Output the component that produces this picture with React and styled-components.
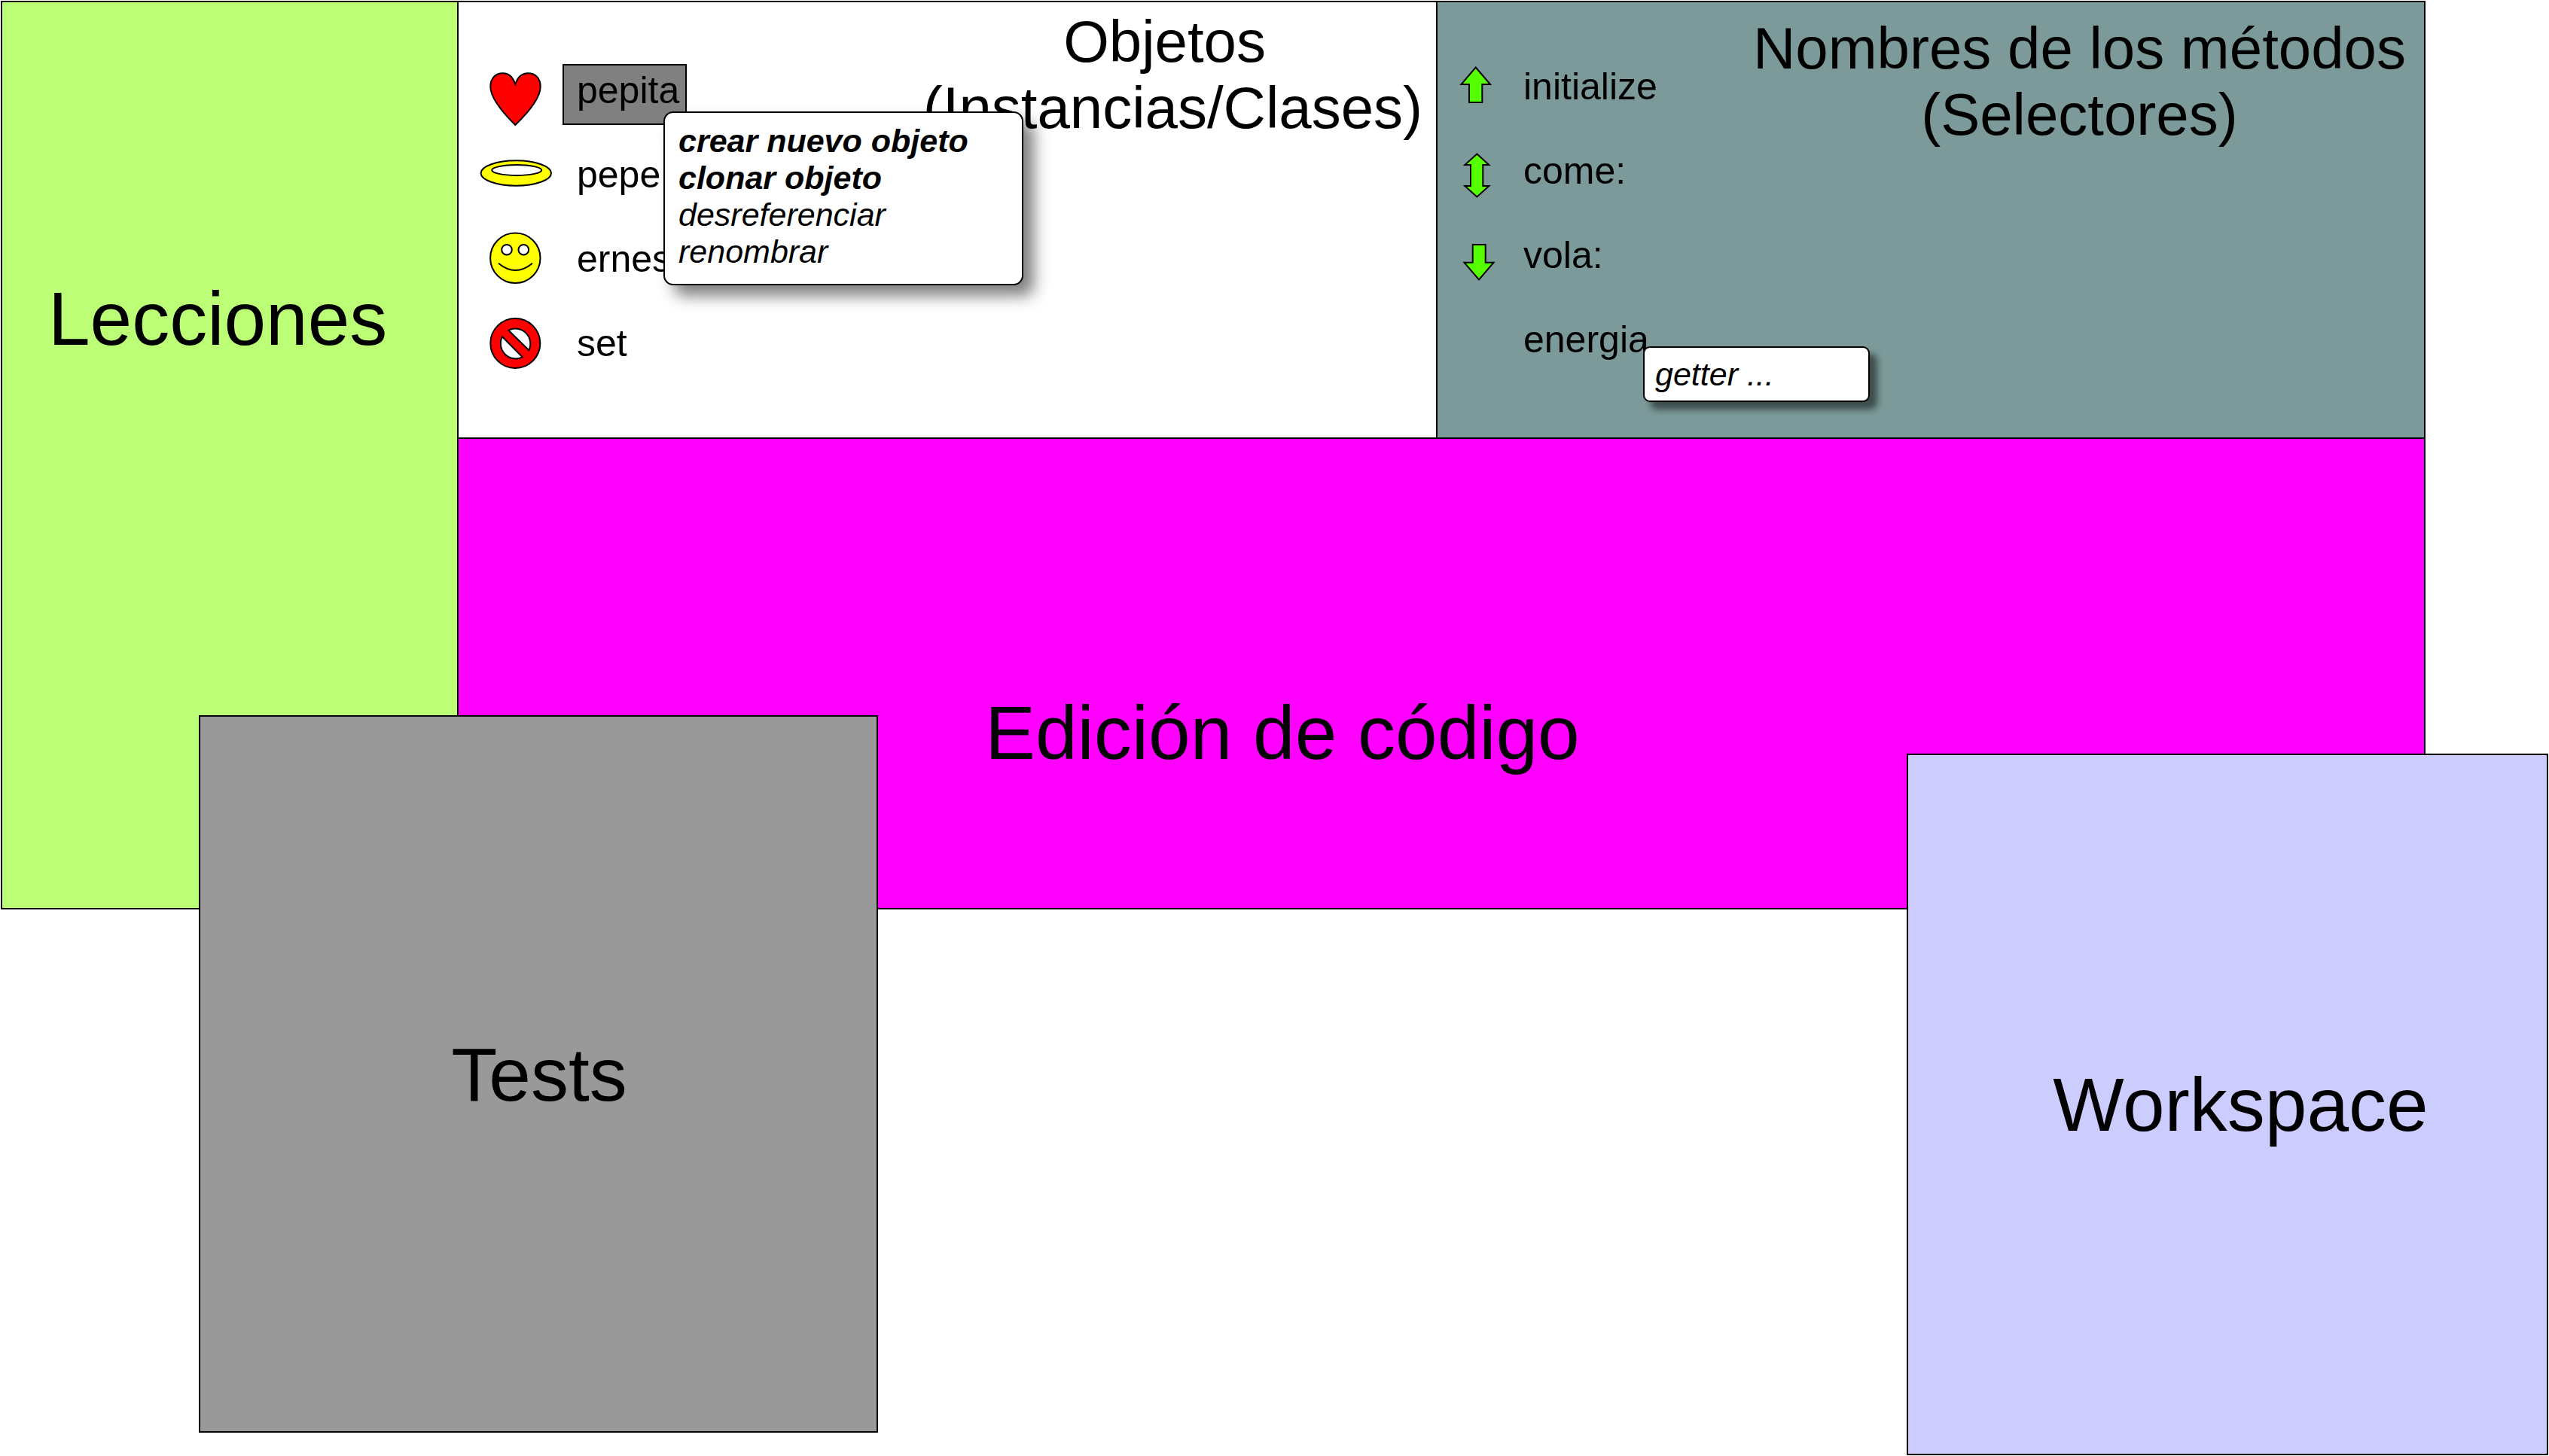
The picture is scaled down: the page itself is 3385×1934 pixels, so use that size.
import React from "react";
import styled, { createGlobalStyle } from "styled-components";

const GlobalStyle = createGlobalStyle`
  * { box-sizing: border-box; }
  body {
    margin: 0;
    background: #ffffff;
    color: #000000;
    font-family: "Liberation Sans", Arial, sans-serif;
  }
`;

const Desktop = styled.main`
  position: relative;
  min-height: 100vh;
  padding: 1px 164px 0 1px;
`;

/* The black background shows through the gaps as the lines between panels. */
const Board = styled.div`
  display: grid;
  grid-template-columns: 604px minmax(0, 1fr);
  gap: 2px;
  padding: 2px;
  background: #000000;
`;

const Browser = styled.div`
  display: grid;
  grid-template-columns: minmax(0, 1298fr) minmax(0, 1310fr);
  gap: 2px;
`;

const Heading = styled.h2`
  margin: 0;
  font-size: 100px;
  line-height: 112px;
  font-weight: 400;
  white-space: nowrap;
`;

const Lessons = styled.section`
  padding: 364px 0 0 61px;
  background: #bcff77;
`;

const Editor = styled.section`
  grid-column: 1 / -1;
  display: flex;
  justify-content: center;
  padding: 334px 422px 177px 0;
  background: #ff00ff;
`;

const Pane = styled.section`
  display: flex;
  justify-content: space-between;
  align-items: flex-start;
  background: ${(p) => p.$color};
`;

const ObjectsPane = styled(Pane)`
  padding: 0 18px 79px 28px;
`;

const MethodsPane = styled(Pane)`
  padding: 0 24px 78px 24px;
`;

const PaneTitle = styled.h2`
  margin: 0;
  padding-top: ${(p) => p.$top}px;
  font-size: 78px;
  line-height: 88px;
  font-weight: 400;
  text-align: center;
  white-space: nowrap;
`;

const List = styled.ul`
  display: flex;
  flex-direction: column;
  gap: 31px;
  margin: 0;
  padding: ${(p) => p.$top}px 0 0;
  list-style: none;
`;

const Row = styled.li`
  display: flex;
  gap: 14px;
  height: 81px;
`;

const Icon = styled.svg`
  flex: none;
  width: ${(p) => p.$width}px;
  height: 81px;
  overflow: visible;
  stroke: #000000;
  stroke-width: 2;
`;

const Entry = styled.div`
  position: relative;
`;

const Name = styled.button`
  display: block;
  padding: 5px 8px 16px 17px;
  border: 2px solid ${(p) => (p.$selected ? "#000000" : "transparent")};
  background: ${(p) => (p.$selected ? "#808080" : "transparent")};
  color: inherit;
  font: 400 50px/56px "Liberation Sans", Arial, sans-serif;
  white-space: nowrap;
`;

const Menu = styled.div`
  position: absolute;
  z-index: 1;
  display: flex;
  flex-direction: column;
  border: 2px solid #000000;
  background: #ffffff;
`;

const ObjectMenu = styled(Menu)`
  top: 63px;
  left: 134px;
  width: 478px;
  padding: 13px 18px 18px;
  border-radius: 13px;
  box-shadow: 14px 14px 20px rgba(0, 0, 0, 0.5);
`;

const MethodMenu = styled(Menu)`
  top: 44px;
  left: 178px;
  width: 301px;
  padding: 11px 14px 10px;
  border-radius: 9px;
  box-shadow: 10px 10px 8px rgba(0, 0, 0, 0.5);
`;

const MenuItem = styled.button`
  padding: 0;
  border: 0;
  background: none;
  color: inherit;
  font: italic ${(p) => (p.$strong ? 700 : 400)} 43px/49px "Liberation Sans", Arial, sans-serif;
  text-align: left;
  white-space: nowrap;
`;

const FloatingWindow = styled.section`
  position: absolute;
  z-index: 2;
  display: flex;
  align-items: center;
  justify-content: center;
  border: 2px solid #000000;
`;

const TestsWindow = styled(FloatingWindow)`
  top: 950px;
  left: 264px;
  width: 902px;
  height: 953px;
  padding-left: 2px;
  background: #999999;
`;

const WorkspaceWindow = styled(FloatingWindow)`
  top: 1001px;
  right: 1px;
  width: 852px;
  height: 932px;
  padding-left: 35px;
  background: #ccccff;
`;

const objects = [
  {
    name: "pepita",
    selected: true,
    drawing: (
      <path
        fill="#ff0000"
        d="M47.3 27C44 17 39 12.3 31 12.3C20 12.3 14.3 20 14.3 30C14.3 44 29 63 47.3 81C66 63 80.7 44 80.7 30C80.7 20 75 12.3 64 12.3C56 12.3 50.6 17 47.3 27Z"
      />
    ),
  },
  {
    name: "pepe",
    drawing: (
      <>
        <ellipse cx="48.3" cy="33" rx="46.7" ry="16.7" fill="#ffff00" />
        <ellipse cx="49.2" cy="29" rx="33" ry="6.9" fill="#ffffff" />
      </>
    ),
  },
  {
    name: "ernesto",
    drawing: (
      <>
        <circle cx="47.3" cy="33.7" r="33.2" fill="#ffff00" />
        <circle cx="36" cy="22.7" r="6.8" fill="#ffffff" />
        <circle cx="58.3" cy="22.7" r="6.8" fill="#ffffff" />
        <path d="M25 40.7Q47.5 59.3 70 40.7" fill="none" />
      </>
    ),
  },
  {
    name: "set",
    drawing: (
      <>
        <circle cx="47.3" cy="35" r="33" fill="#ff0000" />
        <path
          fill="#ffffff"
          d="M38.3 17.7A20 20 0 0 1 65.3 44.3ZM30 26.3A20 20 0 0 0 56.7 53.3Z"
        />
      </>
    ),
  },
];

const objectActions = [
  { label: "crear nuevo objeto", strong: true },
  { label: "clonar objeto", strong: true },
  { label: "desreferenciar" },
  { label: "renombrar" },
];

const methods = [
  { name: "initialize", points: "26.7,9.5 46,32 35.3,32 35.3,56 18,56 18,32 7.5,32" },
  {
    name: "come:",
    points: "28.3,12.5 44.3,27 36.3,27 36.3,55 44.3,55 28.3,69.5 12.3,55 20,55 20,27 12.3,27",
  },
  { name: "vola:", points: "22.7,21 39.7,21 39.7,44.7 50.5,44.7 31,67.5 11.5,44.7 22.7,44.7" },
  { name: "energia", getter: true },
];

export default function App() {
  return (
    <>
      <GlobalStyle />
      <Desktop>
        <Board>
          <Lessons>
            <Heading>Lecciones</Heading>
          </Lessons>
          <Browser>
            <ObjectsPane $color="#ffffff">
              <List $top={82}>
                {objects.map((o) => (
                  <Row key={o.name}>
                    <Icon $width={96} viewBox="0 0 96 81" aria-hidden="true">
                      {o.drawing}
                    </Icon>
                    <Entry>
                      <Name type="button" $selected={o.selected}>
                        {o.name}
                      </Name>
                      {o.selected && (
                        <ObjectMenu>
                          {objectActions.map((a) => (
                            <MenuItem type="button" key={a.label} $strong={a.strong}>
                              {a.label}
                            </MenuItem>
                          ))}
                        </ObjectMenu>
                      )}
                    </Entry>
                  </Row>
                ))}
              </List>
              <PaneTitle $top={8}>
                Objetos&nbsp;
                <br />
                (Instancias/Clases)
              </PaneTitle>
            </ObjectsPane>
            <MethodsPane $color="#7b9a99">
              <List $top={77}>
                {methods.map((m) => (
                  <Row key={m.name}>
                    <Icon $width={57} viewBox="0 0 57 81" aria-hidden="true">
                      {m.points && <polygon points={m.points} fill="#55ff00" />}
                    </Icon>
                    <Entry>
                      <Name type="button">{m.name}</Name>
                      {m.getter && (
                        <MethodMenu>
                          <MenuItem type="button">getter ...</MenuItem>
                        </MethodMenu>
                      )}
                    </Entry>
                  </Row>
                ))}
              </List>
              <PaneTitle $top={17}>
                Nombres de los métodos
                <br />
                (Selectores)
              </PaneTitle>
            </MethodsPane>
            <Editor>
              <Heading>Edición de código</Heading>
            </Editor>
          </Browser>
        </Board>
        <TestsWindow>
          <Heading>Tests</Heading>
        </TestsWindow>
        <WorkspaceWindow>
          <Heading>Workspace</Heading>
        </WorkspaceWindow>
      </Desktop>
    </>
  );
}
